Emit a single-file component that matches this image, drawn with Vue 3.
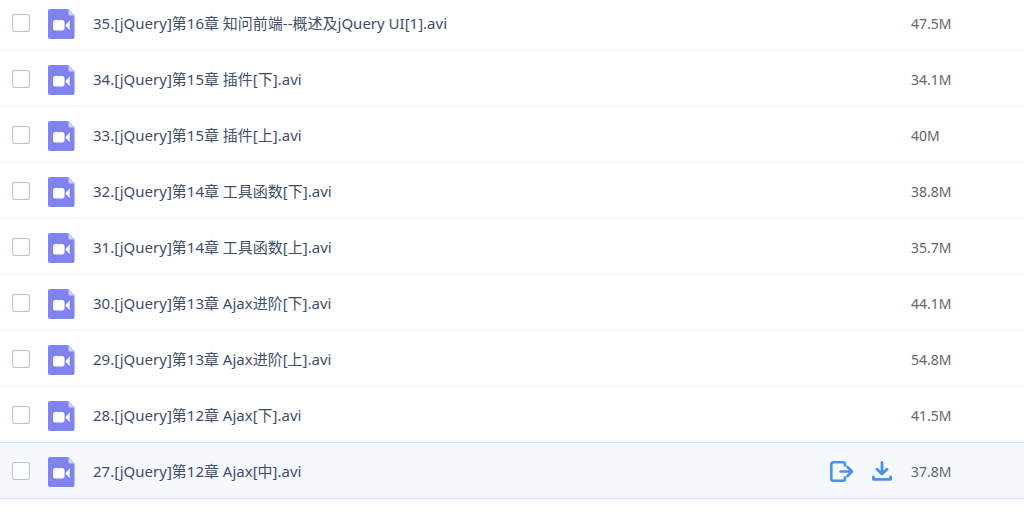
<script setup>
import { ref } from 'vue'

const files = ref([
  { id: 35, name: '35.[jQuery]第16章 知问前端--概述及jQuery UI[1].avi', size: '47.5M' },
  { id: 34, name: '34.[jQuery]第15章 插件[下].avi', size: '34.1M' },
  { id: 33, name: '33.[jQuery]第15章 插件[上].avi', size: '40M' },
  { id: 32, name: '32.[jQuery]第14章 工具函数[下].avi', size: '38.8M' },
  { id: 31, name: '31.[jQuery]第14章 工具函数[上].avi', size: '35.7M' },
  { id: 30, name: '30.[jQuery]第13章 Ajax进阶[下].avi', size: '44.1M' },
  { id: 29, name: '29.[jQuery]第13章 Ajax进阶[上].avi', size: '54.8M' },
  { id: 28, name: '28.[jQuery]第12章 Ajax[下].avi', size: '41.5M' },
  { id: 27, name: '27.[jQuery]第12章 Ajax[中].avi', size: '37.8M' }
])
const activeId = ref(27)
const selected = ref([])
</script>

<template>
  <main class="viewport">
    <table class="files">
      <tbody>
        <tr
          v-for="(file, i) in files"
          :key="file.id"
          :class="{ active: file.id === activeId, before: files[i + 1]?.id === activeId }"
        >
          <td class="check">
            <input :id="`file-${file.id}`" v-model="selected" type="checkbox" :value="file.id" />
          </td>
          <td class="kind">
            <svg class="icon" width="27" height="30" viewBox="0 0 27 30" aria-hidden="true">
              <path d="M2 0H20.500L26.500 6.500V28a2 2 0 0 1-2 2H2a2 2 0 0 1-2-2V2a2 2 0 0 1 2-2z" fill="#8183f1" />
              <path d="M20.500 0L26.500 6.500H22a1.500 1.500 0 0 1-1.500-1.500z" fill="#cfd0fb" />
              <rect x="5" y="11" width="11.500" height="10.500" rx="2.500" fill="#fff" />
              <path d="M17.700 16.300L21.300 12.200V20.400z" fill="#fff" stroke="#fff" stroke-width=".6" stroke-linejoin="round" />
            </svg>
          </td>
          <td class="name"><label :for="`file-${file.id}`">{{ file.name }}</label></td>
          <td class="actions">
            <div v-if="file.id === activeId" class="buttons">
              <button type="button" aria-label="分享">
                <svg class="icon" width="24" height="22" viewBox="0 0 24 22" fill="none" stroke="#4a90f2" stroke-width="2.600" stroke-linecap="round" stroke-linejoin="round">
                  <path d="M15 5.500V4.300a2 2 0 0 0-2-2H3.300a2 2 0 0 0-2 2v14.400a2 2 0 0 0 2 2H13a2 2 0 0 0 2-2V17.500" />
                  <path d="M10.500 11.500H21.500M17.500 7L22 11.500L17.500 16" />
                </svg>
              </button>
              <button type="button" aria-label="下载">
                <svg class="icon" width="20" height="20" viewBox="0 0 20 20" fill="none" stroke="#4a90f2" stroke-width="2.800" stroke-linecap="round" stroke-linejoin="round">
                  <path d="M10 1.400V12.500M5 8.200L10 13L15 8.200" />
                  <path d="M1.400 16V18.400H18.600V16" />
                </svg>
              </button>
            </div>
          </td>
          <td class="size">{{ file.size }}</td>
        </tr>
      </tbody>
    </table>
  </main>
</template>

<style>
body {
  margin: 0;
  background: #fff;
}
</style>

<style scoped>
.viewport {
  overflow: hidden;
  font: 14px/20px "Noto Sans", "Noto Sans CJK SC", sans-serif;
}
.files {
  width: 100%;
  margin-top: -5px;
  table-layout: fixed;
  border-spacing: 0;
}
td {
  height: 55px;
  padding: 0;
  border-bottom: 1px solid #f0f6fd;
  vertical-align: middle;
}
.before td,
.active td {
  border-bottom-color: #d3e6f8;
}
.active td {
  background: #f5f9fe;
}
.icon {
  display: block;
}
.check {
  width: 36px;
  padding-left: 12px;
}
.check input {
  display: block;
  appearance: none;
  box-sizing: border-box;
  width: 18px;
  height: 18px;
  margin: 0;
  border: 1px solid #b9c5d4;
  border-radius: 2px;
  background: #fff;
  box-shadow: inset 0 0 1px #b9c5d4;
}
.check input:checked {
  background: #4a90f2;
}
.kind {
  width: 45px;
  padding-top: 2px;
  height: 53px;
}
.name {
  color: #424e67;
  font-size: 15px;
  white-space: nowrap;
}
.actions {
  width: 81px;
}
.buttons {
  display: flex;
  align-items: center;
  gap: 18px;
}
.buttons button {
  padding: 0;
  border: 0;
  background: none;
  cursor: pointer;
}
.size {
  width: 113px;
  height: 53px;
  padding-top: 2px;
  color: #666;
}
</style>
